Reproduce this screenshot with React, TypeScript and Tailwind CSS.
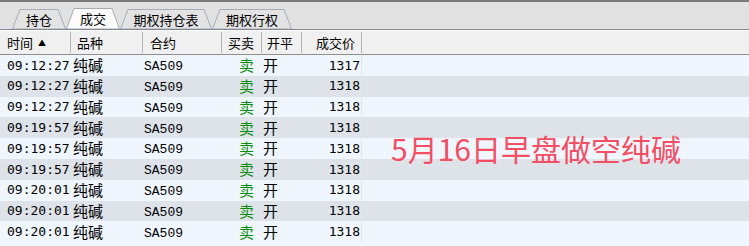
import React from "react";

const CJK = '"Noto Sans CJK SC", "Noto Sans", sans-serif';
const MONO = '"DejaVu Sans Mono", monospace';
const LMONO = '"Liberation Mono", "DejaVu Sans Mono", monospace';

type TabProps = { label: string; w: number; active?: boolean };

function Tab({ label, w, active }: TabProps) {
  const h = active ? 21 : 20;
  return (
    <div
      className={`relative flex items-center justify-center ${active ? "z-10" : ""}`}
      style={{ width: w, height: h }}
    >
      <svg className="absolute inset-0" width={w} height={h} viewBox={`0 0 ${w} ${h}`}>
        <polygon
          points={`0.5,${h} 8,0.5 ${w - 8},0.5 ${w - 0.5},${h}`}
          fill={active ? "#fbfbfb" : "#e3e3e3"}
          stroke="#a6adb5"
          strokeWidth="1"
        />
      </svg>
      <span
        className="relative text-[13px] leading-none text-black"
        style={{ fontFamily: CJK }}
      >
        {label}
      </span>
    </div>
  );
}

const rows: [string, string][] = [
  ["09:12:27", "1317"],
  ["09:12:27", "1318"],
  ["09:12:27", "1318"],
  ["09:19:57", "1318"],
  ["09:19:57", "1318"],
  ["09:19:57", "1318"],
  ["09:20:01", "1318"],
  ["09:20:01", "1318"],
  ["09:20:01", "1318"],
];

export default function App() {
  return (
    <div className="relative w-[749px] h-[246px] overflow-hidden bg-[#f0f6fe] flex flex-col">
      {/* top border */}
      <div className="h-[2px] bg-[#7a7a7a]" />
      {/* tab strip */}
      <div className="h-[28px] bg-[#e1e1e1] flex items-end pl-[12px] border-b border-[#7f8890]">
        <Tab label="持仓" w={54} />
        <Tab label="成交" w={54} active />
        <Tab label="期权持仓表" w={92} />
        <Tab label="期权行权" w={80} />
      </div>
      <div className="h-[1px] bg-white" />
      {/* header */}
      <div
        className="h-[24px] bg-[#f0f0f0] border-b border-[#8f8f8f] flex text-[13px] text-black"
        style={{ fontFamily: CJK }}
      >
        <div className="w-[71px] pl-[7px] flex items-center border-r border-[#b4b4b4] my-[1px]">
          时间<span className="ml-[5px] text-[8px]">▲</span>
        </div>
        <div className="w-[72px] pl-[6px] flex items-center border-r border-[#b4b4b4] my-[1px]">品种</div>
        <div className="w-[79px] pl-[7px] flex items-center border-r border-[#b4b4b4] my-[1px]">合约</div>
        <div className="w-[40px] pl-[6px] flex items-center border-r border-[#b4b4b4] my-[1px]">买卖</div>
        <div className="w-[40px] pl-[5px] flex items-center border-r border-[#b4b4b4] my-[1px]">开平</div>
        <div className="w-[60px] pr-[6px] flex items-center justify-end border-r border-[#b4b4b4] my-[1px]">成交价</div>
        <div className="flex-1" />
      </div>
      {/* rows */}
      <div className="flex flex-col">
        {rows.map(([t, p], i) => (
          <div
            key={i}
            className={`h-[20.8px] flex items-center text-black ${i % 2 === 0 ? "bg-[#f0f6fe]" : "bg-[#dee3ea]"}`}
          >
            <div className="w-[71px] h-full flex items-center pl-[7px] text-[13px]" style={{ fontFamily: MONO }}>
              {t}
            </div>
            <div className="w-[72px] h-full flex items-center pl-[2px] text-[15px]" style={{ fontFamily: CJK }}>
              纯碱
            </div>
            <div
              className="w-[79px] h-full flex items-center pl-[1px] pt-[3px] text-[13px]"
              style={{ fontFamily: LMONO }}
            >
              SA509
            </div>
            <div
              className="w-[40px] h-full flex items-center pl-[17px] text-[15px] text-[#0c8c0c]"
              style={{ fontFamily: CJK }}
            >
              卖
            </div>
            <div className="w-[40px] h-full flex items-center pl-[1px] text-[15px]" style={{ fontFamily: CJK }}>
              开
            </div>
            <div
              className="w-[60px] h-full flex items-center justify-end pr-[1px] text-[13px] border-r border-[#e1e7ef]"
              style={{ fontFamily: MONO }}
            >
              {p}
            </div>
            <div className="flex-1" />
          </div>
        ))}
      </div>
      {/* overlay annotation */}
      <div
        className="absolute left-[391px] top-[131px] text-[30px] leading-[34px] text-[#f24f63] whitespace-nowrap"
        style={{ fontFamily: CJK }}
      >
        5月16日早盘做空纯碱
      </div>
    </div>
  );
}
